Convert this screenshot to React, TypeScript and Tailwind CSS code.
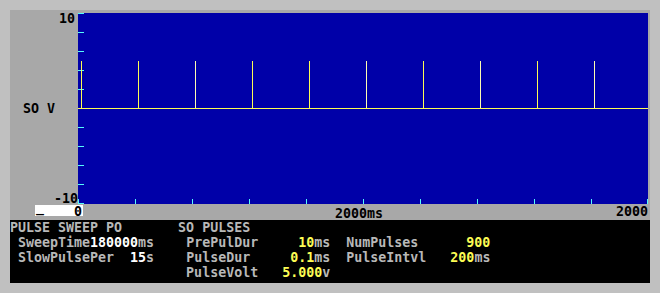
import React from "react";

const mono = { fontFamily: '"DejaVu Sans Mono", "Liberation Mono", monospace' };

// pulses that render lighter in the capture
const lightPulses = [2, 5, 7, 9];

function Plot() {
  const yTicks = Array.from({ length: 11 }, (_, i) => i * 19);
  const xTicks = Array.from({ length: 11 }, (_, i) => Math.min(i * 57, 569));
  const pulses = Array.from({ length: 10 }, (_, i) => 3 + i * 57);

  return (
    <svg width={570} height={191} viewBox="0 0 570 191" shapeRendering="crispEdges" className="block">
      <rect x={0} y={0} width={570} height={191} fill="#0000a8" />
      {yTicks.map((y) => (
        <rect key={`y${y}`} x={0} y={y} width={6} height={1} fill="#54fcfc" />
      ))}
      {xTicks.map((x) => (
        <rect key={`x${x}`} x={x} y={186} width={1} height={5} fill="#54fcfc" />
      ))}
      <rect x={0} y={95} width={570} height={1} fill="#fcfc54" />
      {pulses.map((x, i) => (
        <rect
          key={`p${x}`}
          x={x}
          y={48}
          width={1}
          height={47}
          fill={lightPulses.includes(i) ? "#fcfcb0" : "#fcfc54"}
        />
      ))}
    </svg>
  );
}

function Gray({ children }: { children: React.ReactNode }) {
  return <span className="text-[#b8b8b8]">{children}</span>;
}

function White({ children }: { children: React.ReactNode }) {
  return <span className="text-white">{children}</span>;
}

function Yellow({ children }: { children: React.ReactNode }) {
  return <span className="text-[#fcfc54]">{children}</span>;
}

export default function App() {
  return (
    <div className="w-[660px] h-[293px] bg-[#c0c0c0] pt-[10px] px-[10px] overflow-hidden" style={mono}>
      <div className="w-[640px] bg-[#a8a8a8] flex flex-col">
        {/* plot area */}
        <div className="flex items-start pt-[2px]">
          <div className="w-[68px] h-[193px] flex flex-col justify-between text-black font-bold text-[13.3px] leading-[13px]">
            <div className="text-right pr-[3px]">10</div>
            <div className="pl-[13px]">SO V</div>
            <div className="text-right">-10</div>
          </div>
          <div className="mt-[1px]">
            <Plot />
          </div>
        </div>

        {/* x axis strip */}
        <div className="h-[15px] flex items-start text-black font-bold text-[13.3px] leading-[13px]">
          <div className="ml-[25px] w-[48px] shrink-0 h-[11px] bg-white flex justify-between items-start pl-[1px] pr-[1px] leading-[11px]">
            <span className="-translate-y-[3px]">_</span>
            <span className="pt-[1px]">0</span>
          </div>
          <div className="ml-[252px] mt-[2px]">2000ms</div>
          <div className="ml-auto mr-[2px]">2000</div>
        </div>

        {/* parameter panel */}
        <div className="h-[63px] bg-black text-[13.3px] leading-[15px] font-bold whitespace-pre">
          <div>
            <Gray>{"PULSE SWEEP PO       SO PULSES"}</Gray>
          </div>
          <div>
            <Gray>{" SweepTime"}</Gray>
            <White>180000</White>
            <Gray>{"ms    PrePulDur     "}</Gray>
            <Yellow>10</Yellow>
            <Gray>{"ms  NumPulses      "}</Gray>
            <Yellow>900</Yellow>
          </div>
          <div>
            <Gray>{" SlowPulsePer  "}</Gray>
            <White>15</White>
            <Gray>{"s    PulseDur     "}</Gray>
            <Yellow>0.1</Yellow>
            <Gray>{"ms  PulseIntvl   "}</Gray>
            <Yellow>200</Yellow>
            <Gray>ms</Gray>
          </div>
          <div>
            <Gray>{"                      PulseVolt   "}</Gray>
            <Yellow>5.000</Yellow>
            <Gray>v</Gray>
          </div>
        </div>
      </div>
    </div>
  );
}
